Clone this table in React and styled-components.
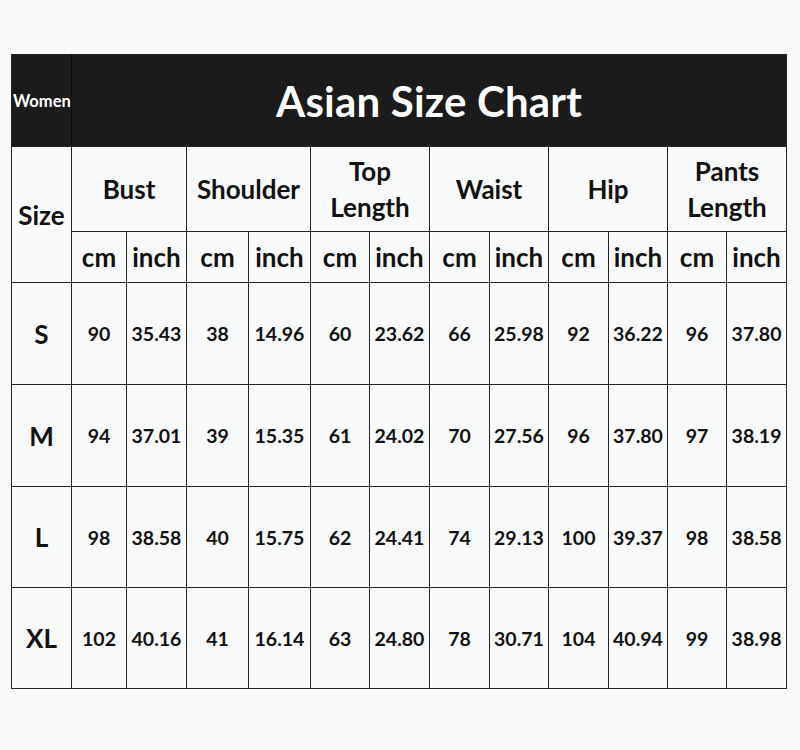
import React from 'react';
import styled, { createGlobalStyle } from 'styled-components';

const GlobalStyle = createGlobalStyle`
    html, body {
        margin: 0;
        padding: 0;
        background: #f8f9f9;
    }
`;

const COLS = [60, 55, 60, 62, 62, 59, 60, 60, 59, 60, 59, 59, 60];

const GROUPS = [
    ['Bust'],
    ['Shoulder'],
    ['Top', 'Length'],
    ['Waist'],
    ['Hip'],
    ['Pants', 'Length'],
];

const ROWS = [
    ['S', '90', '35.43', '38', '14.96', '60', '23.62', '66', '25.98', '92', '36.22', '96', '37.80'],
    ['M', '94', '37.01', '39', '15.35', '61', '24.02', '70', '27.56', '96', '37.80', '97', '38.19'],
    ['L', '98', '38.58', '40', '15.75', '62', '24.41', '74', '29.13', '100', '39.37', '98', '38.58'],
    ['XL', '102', '40.16', '41', '16.14', '63', '24.80', '78', '30.71', '104', '40.94', '99', '38.98'],
];

function App() {
    return (
        <Page>
            <GlobalStyle />
            <Chart>
                <colgroup>
                    {COLS.map((w, i) => (
                        <col key={i} style={{ width: w }} />
                    ))}
                </colgroup>
                <tbody>
                    <TitleRow>
                        <WomenCell>Women</WomenCell>
                        <TitleCell colSpan={12}>Asian Size Chart</TitleCell>
                    </TitleRow>
                    <GroupRow>
                        <SizeCell rowSpan={2}>Size</SizeCell>
                        {GROUPS.map((lines, i) => (
                            <HeadCell key={i} colSpan={2}>
                                {lines.map((l, j) => (
                                    <div key={j}>{l}</div>
                                ))}
                            </HeadCell>
                        ))}
                    </GroupRow>
                    <UnitRow>
                        {GROUPS.map((_, i) => (
                            <React.Fragment key={i}>
                                <HeadCell>cm</HeadCell>
                                <HeadCell>inch</HeadCell>
                            </React.Fragment>
                        ))}
                    </UnitRow>
                    {ROWS.map((row, i) => (
                        <DataRow key={i} $tall={i < 2}>
                            {row.map((v, j) =>
                                j === 0 ? (
                                    <SizeCell key={j}>{v}</SizeCell>
                                ) : (
                                    <ValueCell key={j}>{v}</ValueCell>
                                )
                            )}
                        </DataRow>
                    ))}
                </tbody>
            </Chart>
        </Page>
    );
}

export default App;

const Page = styled.div`
    padding: 54px 0 0 11px;
    font-family: 'Lato', 'Open Sans', sans-serif;
`;

const Chart = styled.table`
    width: 775px;
    table-layout: fixed;
    border-collapse: collapse;
    color: #111;
    font-weight: 700;

    td {
        border: 1px solid #222;
        padding: 0;
        text-align: center;
        vertical-align: middle;
    }
`;

const TitleRow = styled.tr`
    height: 92px;
    background: #1b1b1b;
`;

const WomenCell = styled.td`
    && {
        text-align: left;
        padding-left: 1px;
        border-right-color: #0c0c0c;
    }
    color: #fff;
    font-size: 16.5px;
    white-space: nowrap;
    overflow: hidden;
`;

const TitleCell = styled.td`
    color: #fff;
    font-size: 42px;
    letter-spacing: 0.2px;
`;

const GroupRow = styled.tr`
    height: 85px;
`;

const UnitRow = styled.tr`
    height: 51px;
`;

const HeadCell = styled.td`
    font-size: 26px;
    line-height: 36px;
`;

const SizeCell = styled.td`
    font-size: 26px;
`;

const DataRow = styled.tr`
    height: ${(p) => (p.$tall ? '102px' : '101px')};
`;

const ValueCell = styled.td`
    font-size: 19.5px;
`;
